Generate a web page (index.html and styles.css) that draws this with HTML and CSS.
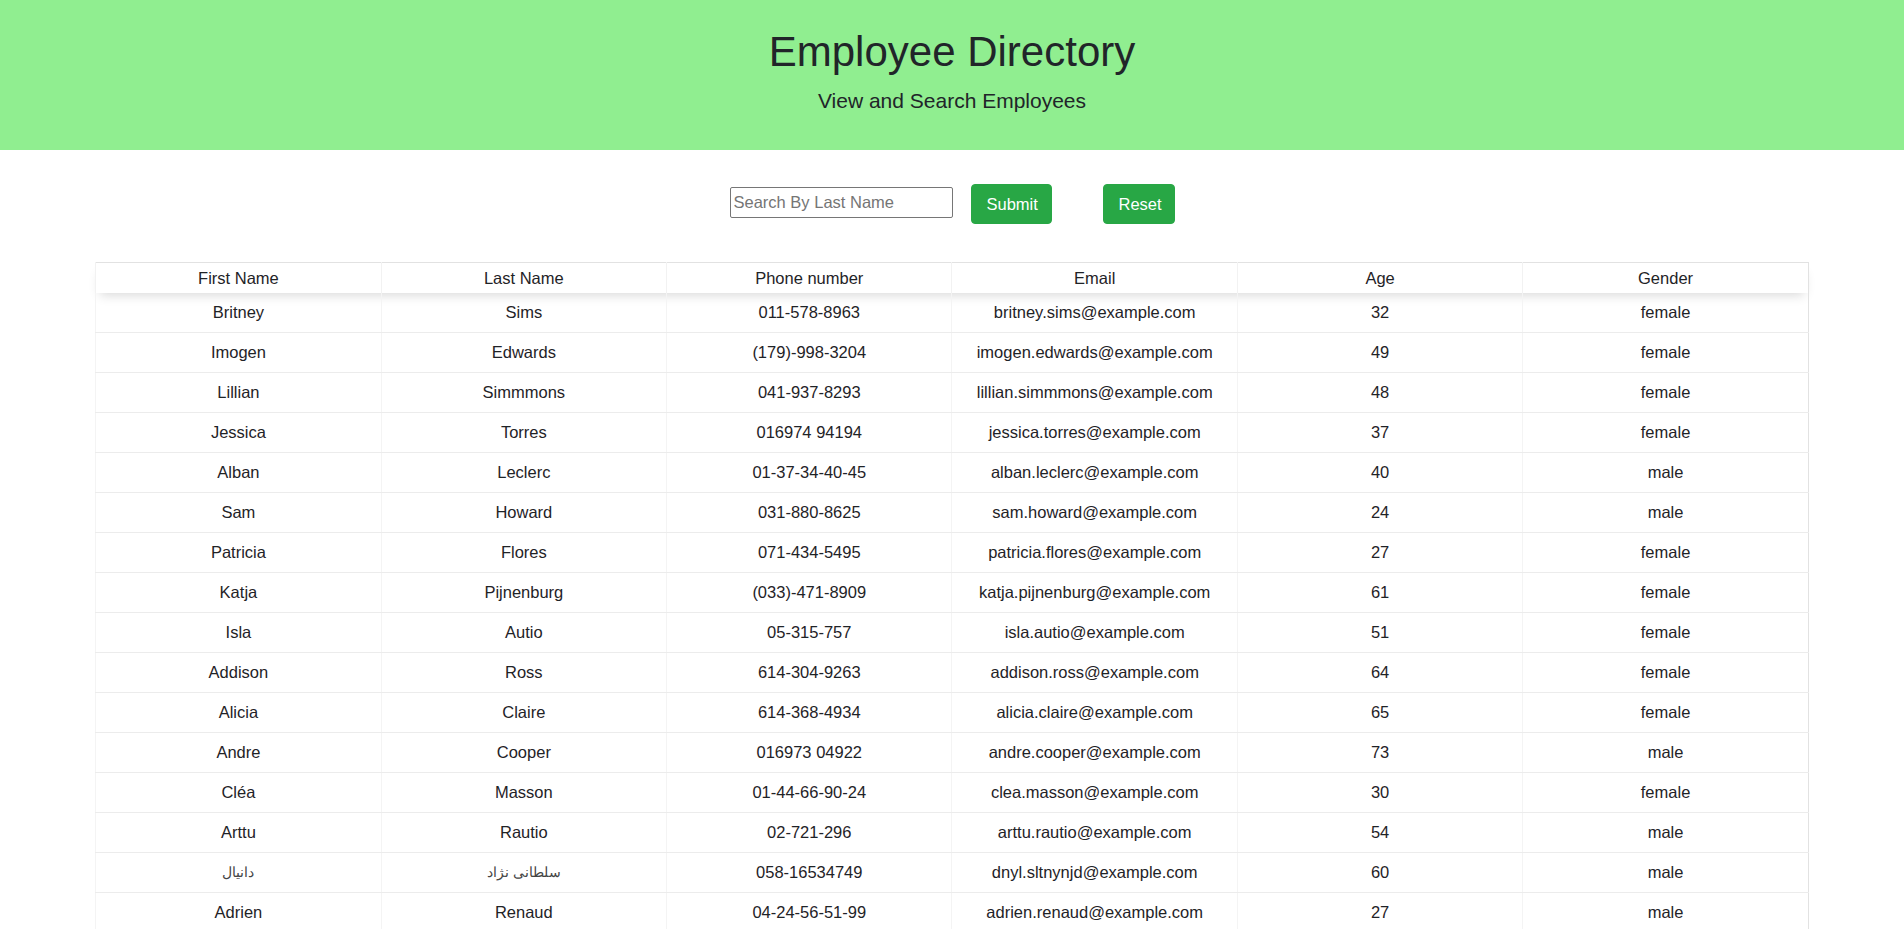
FILE: index.html
```html
<!DOCTYPE html>
<html lang="en">
<head>
<meta charset="utf-8">
<title>Employee Directory</title>
<link rel="stylesheet" href="styles.css">
</head>
<body>
<header class="hero">
  <h1 class="hero-title">Employee Directory</h1>
  <p class="hero-sub">View and Search Employees</p>
</header>
<main>
  <form class="search">
    <input class="search-input" type="text" placeholder="Search By Last Name">
    <button class="btn btn-submit" type="button">Submit</button>
    <button class="btn btn-reset" type="button">Reset</button>
  </form>
  <table class="emp-table">
    <thead>
      <tr><th>First Name</th><th>Last Name</th><th>Phone number</th><th>Email</th><th>Age</th><th>Gender</th></tr>
    </thead>
    <tbody>
      <tr><td>Britney</td><td>Sims</td><td>011-578-8963</td><td>britney.sims@example.com</td><td>32</td><td>female</td></tr>
      <tr><td>Imogen</td><td>Edwards</td><td>(179)-998-3204</td><td>imogen.edwards@example.com</td><td>49</td><td>female</td></tr>
      <tr><td>Lillian</td><td>Simmmons</td><td>041-937-8293</td><td>lillian.simmmons@example.com</td><td>48</td><td>female</td></tr>
      <tr><td>Jessica</td><td>Torres</td><td>016974 94194</td><td>jessica.torres@example.com</td><td>37</td><td>female</td></tr>
      <tr><td>Alban</td><td>Leclerc</td><td>01-37-34-40-45</td><td>alban.leclerc@example.com</td><td>40</td><td>male</td></tr>
      <tr><td>Sam</td><td>Howard</td><td>031-880-8625</td><td>sam.howard@example.com</td><td>24</td><td>male</td></tr>
      <tr><td>Patricia</td><td>Flores</td><td>071-434-5495</td><td>patricia.flores@example.com</td><td>27</td><td>female</td></tr>
      <tr><td>Katja</td><td>Pijnenburg</td><td>(033)-471-8909</td><td>katja.pijnenburg@example.com</td><td>61</td><td>female</td></tr>
      <tr><td>Isla</td><td>Autio</td><td>05-315-757</td><td>isla.autio@example.com</td><td>51</td><td>female</td></tr>
      <tr><td>Addison</td><td>Ross</td><td>614-304-9263</td><td>addison.ross@example.com</td><td>64</td><td>female</td></tr>
      <tr><td>Alicia</td><td>Claire</td><td>614-368-4934</td><td>alicia.claire@example.com</td><td>65</td><td>female</td></tr>
      <tr><td>Andre</td><td>Cooper</td><td>016973 04922</td><td>andre.cooper@example.com</td><td>73</td><td>male</td></tr>
      <tr><td>Cléa</td><td>Masson</td><td>01-44-66-90-24</td><td>clea.masson@example.com</td><td>30</td><td>female</td></tr>
      <tr><td>Arttu</td><td>Rautio</td><td>02-721-296</td><td>arttu.rautio@example.com</td><td>54</td><td>male</td></tr>
      <tr><td class="rtl">دانیال</td><td class="rtl">سلطانی نژاد</td><td>058-16534749</td><td>dnyl.sltnynjd@example.com</td><td>60</td><td>male</td></tr>
      <tr><td>Adrien</td><td>Renaud</td><td>04-24-56-51-99</td><td>adrien.renaud@example.com</td><td>27</td><td>male</td></tr>
    </tbody>
  </table>
</main>
</body>
</html>
```
FILE: styles.css
```css
html, body {
  margin: 0;
  padding: 0;
}

body {
  font-family: "Liberation Sans", Arial, sans-serif;
  color: #212529;
  background: #ffffff;
}

.hero {
  background: #90ee90;
  text-align: center;
  padding: 28px 0 34px;
}

.hero-title {
  margin: 0 0 10px;
  font-size: 42px;
  font-weight: 400;
  line-height: 48px;
}

.hero-sub {
  margin: 0;
  font-size: 21px;
  line-height: 30px;
}

.search {
  display: flex;
  justify-content: center;
  align-items: flex-start;
  margin: 34px 0 0;
}

.search-input {
  box-sizing: border-box;
  width: 223px;
  height: 31px;
  margin-top: 3px;
  padding: 0 3px;
  border: 1px solid #767676;
  border-radius: 2px;
  font-family: "Liberation Sans", Arial, sans-serif;
  font-size: 16.5px;
  color: #212529;
}

.search-input::placeholder {
  color: #757575;
}

.btn {
  box-sizing: border-box;
  height: 40px;
  padding: 0 15px;
  border: 1px solid #28a745;
  border-radius: 4px;
  background: #28a745;
  color: #ffffff;
  font-family: "Liberation Sans", Arial, sans-serif;
  font-size: 16.5px;
  line-height: 38px;
  cursor: pointer;
}

.btn-submit {
  margin-left: 18px;
  width: 81px;
}

.btn-reset {
  margin-left: 51px;
  width: 72px;
}

.emp-table {
  width: 90%;
  margin: 38px auto 0;
  border-collapse: collapse;
  table-layout: fixed;
  border: 1px solid #e2e2e2;
  font-size: 16.5px;
  color: #1f2327;
}

.emp-table thead tr {
  box-shadow: 0 6px 12px -4px rgba(0, 0, 0, 0.16);
}

.emp-table th {
  font-weight: 400;
  line-height: 24px;
  padding: 3px 4px;
  text-align: center;
  border-left: 1px solid #f2f2f2;
  background: #ffffff;
}

.emp-table td {
  line-height: 23px;
  padding: 8px 4px;
  text-align: center;
  border-bottom: 1px solid #ececec;
  border-left: 1px solid #f4f4f4;
}

.emp-table .rtl {
  font-size: 14px;
  color: #444;
}
```
